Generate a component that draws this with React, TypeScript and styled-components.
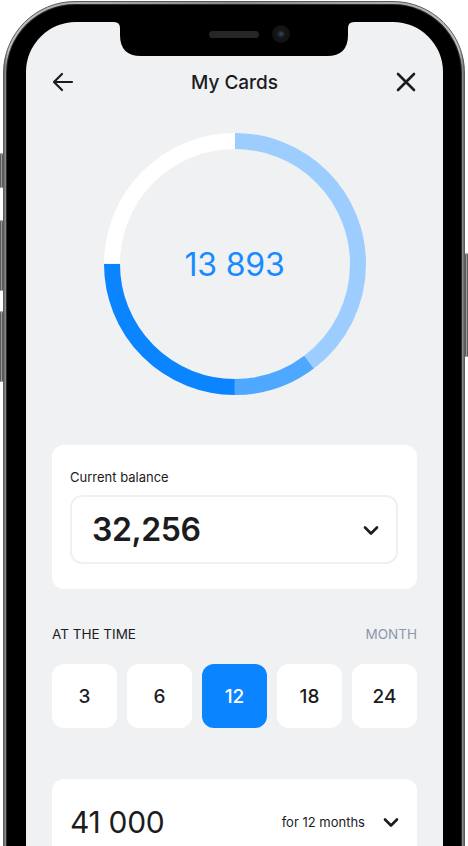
import { FC } from "react";
import styled, { createGlobalStyle } from "styled-components";

const GlobalStyle = createGlobalStyle`
  html, body {
    margin: 0;
    padding: 0;
    background: #ffffff;
    overflow: hidden;
  }
  body {
    font-family: Inter, "Liberation Sans", sans-serif;
    -webkit-font-smoothing: antialiased;
  }
`;

const MONTHS = [3, 6, 12, 18, 24];

// donut segments, in fractions of a full turn starting at 12 o'clock
const SEGMENTS = [
  { from: 0, to: 0.397, color: "#9dcdff" },
  { from: 0.397, to: 0.5, color: "#4ea8ff" },
  { from: 0.5, to: 0.75, color: "#0a84ff" },
  { from: 0.75, to: 1, color: "#ffffff" },
];

const Chevron: FC<{ size?: number }> = ({ size = 18 }) => (
  <svg width={size} height={size} viewBox="0 0 18 18" fill="none">
    <path d="M3 6.5 L9 12.5 L15 6.5" stroke="#1c1c1e" strokeWidth="2.6" strokeLinecap="round" strokeLinejoin="round" />
  </svg>
);

const Donut: FC = () => {
  const r = 123;
  const c = 2 * Math.PI * r;
  return (
    <SDonut>
      <svg width="262" height="262" viewBox="0 0 262 262">
        <g transform="rotate(-90 131 131)">
          {SEGMENTS.map((s) => (
            <circle
              key={s.color}
              cx="131"
              cy="131"
              r={r}
              fill="none"
              stroke={s.color}
              strokeWidth="16"
              strokeDasharray={`${(s.to - s.from) * c} ${c}`}
              strokeDashoffset={-s.from * c}
            />
          ))}
        </g>
      </svg>
      <SDonutValue>13 893</SDonutValue>
    </SDonut>
  );
};

export default function App() {
  return (
    <>
      <GlobalStyle />
      <SPage>
        <SPhone>
          <SSideButton $side="left" $top={151} $height={35} />
          <SSideButton $side="left" $top={218} $height={71} />
          <SSideButton $side="left" $top={309} $height={71} />
          <SSideButton $side="right" $top={251} $height={104} />
          <SRim>
            <SBezel>
              <SScreen>
                <SNotch>
                  <svg width="240" height="35" viewBox="0 0 240 35">
                    <path d="M0 0 Q6 0 6 6 V13 Q6 34 27 34 H213 Q234 34 234 13 V6 Q234 0 240 0 Z" fill="#000" />
                  </svg>
                  <SSpeaker />
                  <SCamera />
                </SNotch>

                <SHeader>
                  <svg width="22" height="22" viewBox="0 0 22 22" fill="none">
                    <path d="M20 11 H2.5 M10 3 L2 11 L10 19" stroke="#1c1c1e" strokeWidth="2.2" strokeLinecap="round" strokeLinejoin="round" />
                  </svg>
                  <STitle>My Cards</STitle>
                  <svg width="22" height="22" viewBox="0 0 22 22" fill="none">
                    <path d="M3 3 L19 19 M19 3 L3 19" stroke="#1c1c1e" strokeWidth="2.6" strokeLinecap="round" />
                  </svg>
                </SHeader>

                <Donut />

                <SCard>
                  <SLabel>Current balance</SLabel>
                  <SSelect>
                    <SBalance>32,256</SBalance>
                    <Chevron />
                  </SSelect>
                </SCard>

                <SSectionRow>
                  <SSectionTitle>AT THE TIME</SSectionTitle>
                  <SSectionUnit>MONTH</SSectionUnit>
                </SSectionRow>

                <SMonths>
                  {MONTHS.map((m) => (
                    <SMonth key={m} $active={m === 12}>
                      {m}
                    </SMonth>
                  ))}
                </SMonths>

                <SLoanCard>
                  <SLoanAmount>41 000</SLoanAmount>
                  <SLoanTerm>
                    for 12 months
                    <Chevron />
                  </SLoanTerm>
                </SLoanCard>
              </SScreen>
            </SBezel>
          </SRim>
        </SPhone>
      </SPage>
    </>
  );
}

const SPage = styled.div`
  width: 468px;
  height: 846px;
  overflow: hidden;
  padding: 1px 0 0 3px;
  box-sizing: border-box;
`;
const SPhone = styled.div`
  position: relative;
  width: 462px;
  height: 960px;
  border-radius: 72px;
  background: linear-gradient(90deg, #6a6a6a, #bdbdbd 1%, #8a8a8a 50%, #bdbdbd 99%, #6a6a6a);
  padding: 2px;
  box-sizing: border-box;
  border: 1px solid #5c5c5c;
`;
const SSideButton = styled.div<{ $side: "left" | "right"; $top: number; $height: number }>`
  position: absolute;
  ${(p) => (p.$side === "left" ? "left: -4px;" : "right: -4px;")}
  top: ${(p) => p.$top}px;
  width: 3px;
  height: ${(p) => p.$height}px;
  background: linear-gradient(90deg, #3c3c3c, #9a9a9a, #3c3c3c);
  border-radius: 2px;
`;
const SRim = styled.div`
  height: 100%;
  border-radius: 69px;
  background: #2b2b2b;
  padding: 1px;
  box-sizing: border-box;
`;
const SBezel = styled.div`
  height: 100%;
  border-radius: 68px;
  background: #000;
  padding: 17px 18px 0 19px;
  box-sizing: border-box;
`;
const SScreen = styled.div`
  position: relative;
  height: 100%;
  border-radius: 50px 50px 0 0;
  background: #f0f1f3;
  padding: 40px 26px 0 26px;
  box-sizing: border-box;
  display: flex;
  flex-direction: column;
`;
const SNotch = styled.div`
  position: absolute;
  top: 0;
  left: 88px;
  width: 240px;
  height: 35px;
  svg {
    display: block;
  }
`;
const SSpeaker = styled.div`
  position: absolute;
  top: 9px;
  left: 95px;
  width: 50px;
  height: 7px;
  border-radius: 4px;
  background: #262626;
`;
const SCamera = styled.div`
  position: absolute;
  top: 3px;
  left: 158px;
  width: 18px;
  height: 18px;
  border-radius: 50%;
  background: radial-gradient(circle at 50% 50%, #3b4a5c 0, #1a2230 3px, #161616 4px, #111 9px);
`;
const SHeader = styled.div`
  height: 40px;
  display: flex;
  align-items: center;
  justify-content: space-between;
  svg {
    flex-shrink: 0;
  }
`;
const STitle = styled.h1`
  margin: 0;
  font-size: 19px;
  font-weight: 500;
  color: #1c1c1e;
  letter-spacing: 0;
`;
const SDonut = styled.div`
  position: relative;
  align-self: center;
  width: 262px;
  height: 262px;
  margin-top: 31px;
  svg {
    display: block;
  }
`;
const SDonutValue = styled.div`
  position: absolute;
  inset: 0;
  display: flex;
  align-items: center;
  justify-content: center;
  font-size: 32px;
  font-weight: 400;
  color: #178bff;
  letter-spacing: -0.2px;
`;
const SCard = styled.div`
  margin-top: 50px;
  background: #fff;
  border-radius: 12px;
  padding: 24px 19px 25px 18px;
`;
const SLabel = styled.div`
  font-size: 13px;
  line-height: 16px;
  color: #1c1c1e;
`;
const SSelect = styled.div`
  margin-top: 10px;
  height: 69px;
  box-sizing: border-box;
  border: 2px solid #eef0f3;
  border-radius: 12px;
  display: flex;
  align-items: center;
  justify-content: space-between;
  padding: 0 16px 0 20px;
`;
const SBalance = styled.div`
  font-size: 32px;
  font-weight: 600;
  color: #1c1c1e;
  letter-spacing: -0.4px;
`;
const SSectionRow = styled.div`
  margin-top: 35px;
  height: 20px;
  display: flex;
  align-items: center;
  justify-content: space-between;
`;
const SSectionTitle = styled.div`
  font-size: 13.5px;
  color: #1c1c1e;
`;
const SSectionUnit = styled.div`
  font-size: 13.5px;
  color: #8c97a8;
`;
const SMonths = styled.div`
  margin-top: 20px;
  display: grid;
  grid-template-columns: repeat(5, 1fr);
  gap: 10px;
`;
const SMonth = styled.div<{ $active?: boolean }>`
  height: 64px;
  border-radius: 12px;
  display: flex;
  align-items: center;
  justify-content: center;
  font-size: 19px;
  font-weight: 500;
  background: ${(p) => (p.$active ? "#0a84ff" : "#ffffff")};
  color: ${(p) => (p.$active ? "#ffffff" : "#1c1c1e")};
`;
const SLoanCard = styled.div`
  margin-top: 51px;
  background: #fff;
  border-radius: 12px 12px 0 0;
  height: 120px;
  padding: 26px 17px 0 18px;
  display: flex;
  align-items: flex-start;
  justify-content: space-between;
`;
const SLoanAmount = styled.div`
  font-size: 30px;
  line-height: 34px;
  font-weight: 400;
  color: #1c1c1e;
  letter-spacing: -0.3px;
`;
const SLoanTerm = styled.div`
  display: flex;
  align-items: center;
  gap: 17px;
  height: 34px;
  font-size: 13px;
  color: #1c1c1e;
`;
